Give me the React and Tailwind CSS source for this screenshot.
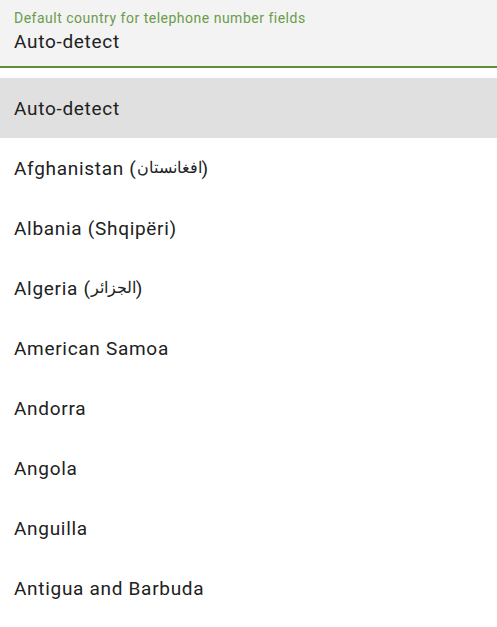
export default function App() {
  const countries = [
    ['Afghanistan', 'افغانستان'],
    ['Albania (Shqipëri)'],
    ['Algeria', 'الجزائر'],
    ['American Samoa'],
    ['Andorra'],
    ['Angola'],
    ['Anguilla'],
    ['Antigua and Barbuda'],
  ]

  return (
    <div className="w-[497px] h-[627px] bg-white overflow-hidden font-['Roboto','Noto_Sans',sans-serif] text-[#212121]">
      <div className="h-[68px] bg-[#f3f3f3] border-b-2 border-[#5e8d3e] px-[14px] pt-[9px]">
        <div className="text-[14px] leading-[18px] tracking-[0.5px] text-[#6a9c4a]">Default country for telephone number fields</div>
        <div className="text-[19px] leading-[28px] tracking-[0.7px] pt-[1px]">Auto-detect</div>
      </div>
      <ul className="mt-[10px] text-[19px] tracking-[0.7px]">
        <li className="h-[60px] flex items-center px-[14px] pt-[2px] bg-[#e0e0e0]">Auto-detect</li>
        {countries.map(([name, native], i) => (
          <li key={i} className="h-[60px] flex items-center px-[14px] pt-[2px] whitespace-pre">
            {native ? (
              <>
                {name} (<span className="text-[15.5px] tracking-normal">{native}</span>)
              </>
            ) : (
              name
            )}
          </li>
        ))}
      </ul>
    </div>
  )
}
